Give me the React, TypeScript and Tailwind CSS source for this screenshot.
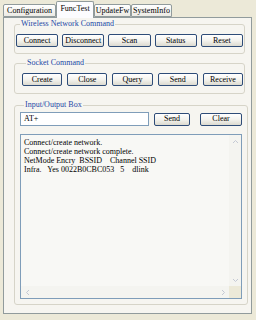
const serif = "font-['Liberation_Serif','Times_New_Roman',serif]";

function Btn({ label }: { label: string }) {
  return (
    <button className="w-full h-[13px] flex items-center justify-center rounded-[2px] border border-[#2e4c78] bg-gradient-to-b from-[#ffffff] via-[#f4f3ee] to-[#dcdad0] text-[8px] leading-none text-black">
      {label}
    </button>
  );
}

function Tab({ label, active, w }: { label: string; active?: boolean; w: string }) {
  return (
    <div
      className={
        active
          ? `${w} h-[17px] -mb-px z-10 flex items-start justify-center pt-[3px] border border-b-0 border-[#919b9c] bg-[#fcfcfe] rounded-t-[2px] text-[8px] leading-none`
          : `${w} h-[13px] flex items-start justify-center pt-[2px] border border-[#919b9c] bg-gradient-to-b from-[#ffffff] to-[#ecebe5] rounded-t-[2px] text-[8px] leading-none`
      }
    >
      {label}
    </div>
  );
}

function Group({ title, children, className }: { title: string; children: React.ReactNode; className: string }) {
  return (
    <fieldset className={`border border-solid border-[#d6d4c8] rounded-[3px] ${className}`}>
      <legend className="ml-[4px] px-[1px] h-[10px] text-[8px] leading-[10px] text-[#2348a6]">{title}</legend>
      {children}
    </fieldset>
  );
}

export default function App() {
  return (
    <div className={`w-[256px] h-[320px] bg-[#ece9d8] overflow-hidden text-black ${serif}`}>
      {/* Tabs */}
      <div className="flex items-end h-[17px] pl-[3px]">
        <Tab label="Configuration" w="w-[53px]" />
        <Tab label="FuncTest" active w="w-[38px]" />
        <Tab label="UpdateFw" w="w-[37px]" />
        <Tab label="SystemInfo" w="w-[41px]" />
      </div>

      {/* Panel */}
      <div className="ml-[3px] w-[249px] h-[297px] border border-[#919b9c] bg-[#f6f5f0] pl-[10px] pr-[6px] pt-px">
        <Group title="Wireless Network Command" className="pt-[5px] pb-[6px] px-px">
          <div className="grid grid-cols-5 gap-[4px]">
            <Btn label="Connect" />
            <Btn label="Disconnect" />
            <Btn label="Scan" />
            <Btn label="Status" />
            <Btn label="Reset" />
          </div>
        </Group>

        <Group title="Socket Command" className="mt-[4px] pt-[5px] pb-[7px] pl-[7px] pr-px">
          <div className="grid grid-cols-5 gap-[5px]">
            <Btn label="Create" />
            <Btn label="Close" />
            <Btn label="Query" />
            <Btn label="Send" />
            <Btn label="Receive" />
          </div>
        </Group>

        <Group title="Input/Output Box" className="mt-[6px] pt-[2px] pb-[5px] pl-[5px] pr-[5px]">
          <div className="flex items-center h-[14px]">
            <div className="w-[129px] h-[14px] border border-[#7f9db9] bg-white text-[8px] leading-[12px] pl-[3px]">AT+</div>
            <div className="w-[36px] ml-[5px]">
              <Btn label="Send" />
            </div>
            <div className="w-[42px] ml-[10px]">
              <Btn label="Clear" />
            </div>
          </div>

          <div className="mt-[8px] h-[165px] border border-[#7f9db9] bg-[#f8f8f5] flex flex-col">
            <div className="flex flex-1">
              <div className="flex-1 pl-[3px] pt-[3px] text-[8px] leading-[9px] whitespace-pre">
                <div>Connect/create network.</div>
                <div>Connect/create network complete.</div>
                <div>NetMode Encry  BSSID    Channel SSID</div>
                <div>Infra.   Yes 0022B0CBC053   5    dlink</div>
              </div>
              {/* vertical scrollbar */}
              <div className="w-[12px] flex flex-col justify-between bg-[#f4f4f0]">
                <div className="h-[12px] flex items-center justify-center text-[#c4c9d4]">
                  <svg width="7" height="5" viewBox="0 0 7 5"><path d="M1 4 L3.5 1.5 L6 4" fill="none" stroke="currentColor" strokeWidth="1" /></svg>
                </div>
                <div className="h-[12px] flex items-center justify-center text-[#c4c9d4]">
                  <svg width="7" height="5" viewBox="0 0 7 5"><path d="M1 1 L3.5 3.5 L6 1" fill="none" stroke="currentColor" strokeWidth="1" /></svg>
                </div>
              </div>
            </div>
            {/* horizontal scrollbar */}
            <div className="h-[12px] flex">
              <div className="flex-1 flex justify-between bg-[#f4f4f0]">
                <div className="w-[12px] flex items-center justify-center text-[#c4c9d4]">
                  <svg width="5" height="7" viewBox="0 0 5 7"><path d="M4 1 L1.5 3.5 L4 6" fill="none" stroke="currentColor" strokeWidth="1" /></svg>
                </div>
                <div className="w-[12px] flex items-center justify-center text-[#c4c9d4]">
                  <svg width="5" height="7" viewBox="0 0 5 7"><path d="M1 1 L3.5 3.5 L1 6" fill="none" stroke="currentColor" strokeWidth="1" /></svg>
                </div>
              </div>
              <div className="w-[12px] bg-[#ece9d8]" />
            </div>
          </div>
        </Group>
      </div>
    </div>
  );
}
